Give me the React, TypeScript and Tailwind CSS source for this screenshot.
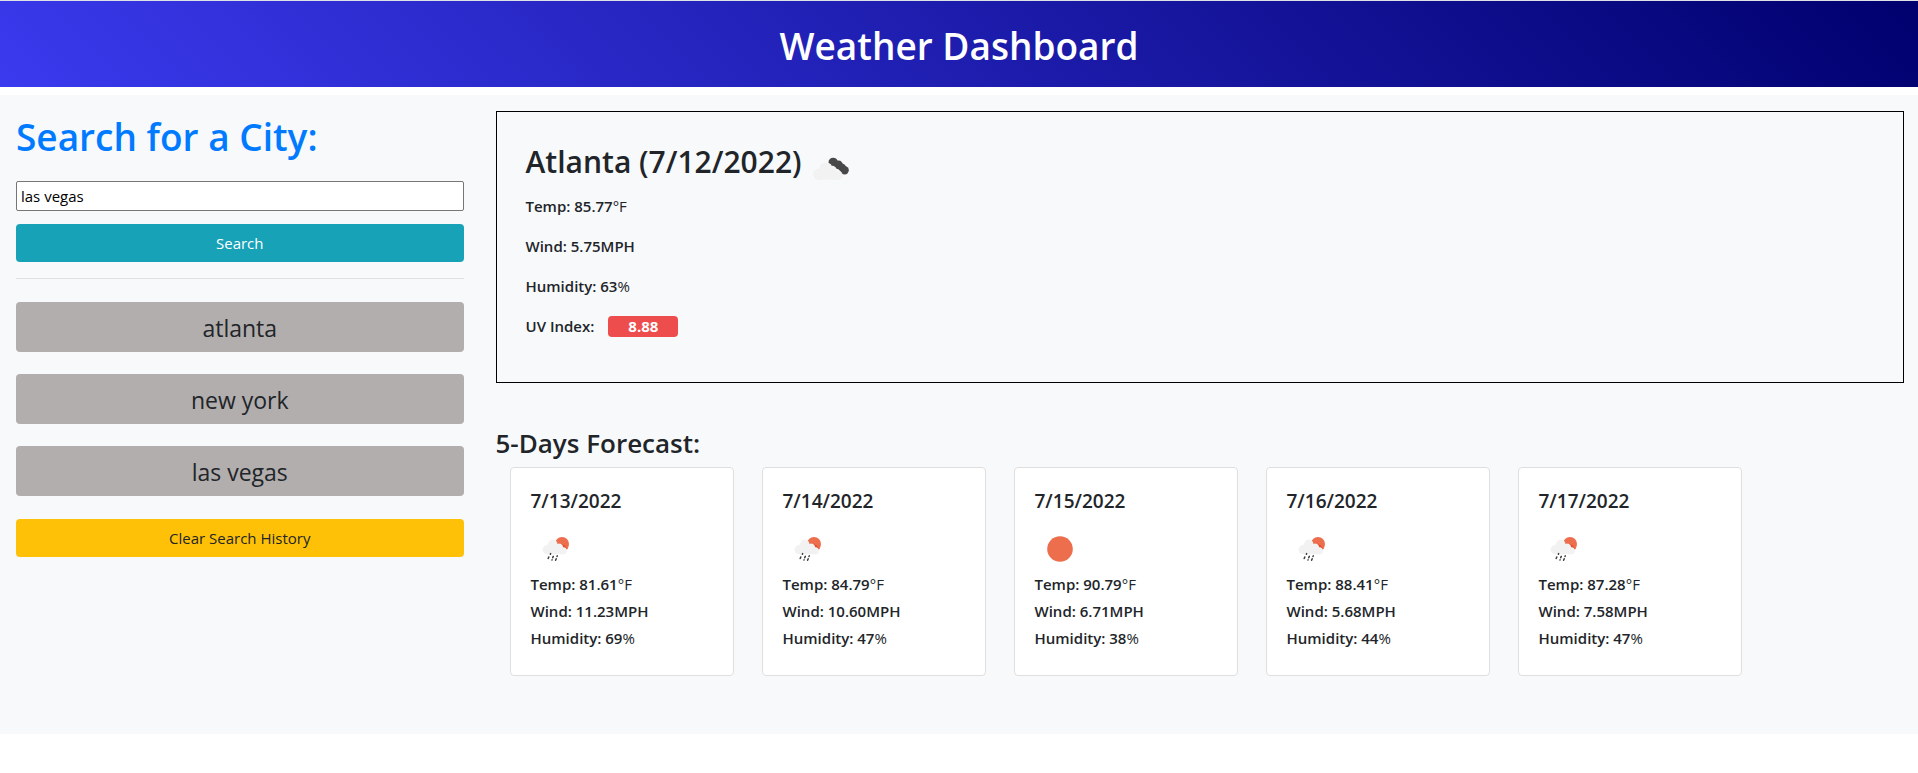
import React, { useState } from "react";

type IconKind = "rain" | "sun" | "clouds";

interface Day {
  date: string;
  icon: IconKind;
  temp: string;
  wind: string;
  humidity: string;
}

const DAYS: Day[] = [
  { date: "7/13/2022", icon: "rain", temp: "81.61", wind: "11.23", humidity: "69" },
  { date: "7/14/2022", icon: "rain", temp: "84.79", wind: "10.60", humidity: "47" },
  { date: "7/15/2022", icon: "sun", temp: "90.79", wind: "6.71", humidity: "38" },
  { date: "7/16/2022", icon: "rain", temp: "88.41", wind: "5.68", humidity: "44" },
  { date: "7/17/2022", icon: "rain", temp: "87.28", wind: "7.58", humidity: "47" },
];

const HISTORY = ["atlanta", "new york", "las vegas"];

function WeatherIcon({ kind }: { kind: IconKind }) {
  return (
    <svg className="block size-[50px] shrink-0" viewBox="0 0 50 50" aria-hidden="true">
      {kind === "sun" && <circle cx="25" cy="25" r="12.8" fill="#ec6e4c" />}
      {kind === "rain" && (
        <>
          <circle cx="31" cy="19.9" r="7" fill="#ec6e4c" />
          <path
            d="M26 19.200c1.600-.8 3.500 0 4.200 1.300 2.300-.5 4.500.9 4.500 2.800 1.200.2 1.900.800 2.200 1.500l-1 .8-8-1z"
            fill="#e2512f"
          />
          <g fill="#f2f2f2">
            <circle cx="16.200" cy="25.700" r="4.600" />
            <circle cx="21.800" cy="20.200" r="4.700" />
            <circle cx="28" cy="23.800" r="4.200" />
            <circle cx="32.400" cy="26.800" r="3.500" />
            <path d="M16.200 20.500h11l6 9.800h-17z" />
          </g>
          <path
            d="M19.600 29.600l-.2.600M17.800 33l-.6 1.500M22.300 32.400l-.6 1.400M21.100 35.800l-.1.200M26.300 31.900l-.3.600M25.200 34.800l-.6 1.500"
            stroke="#3c3c3c"
            strokeWidth="1.500"
            strokeLinecap="round"
          />
        </>
      )}
      {kind === "clouds" && (
        <>
          <g fill="#484848">
            <circle cx="27.200" cy="18.400" r="4.700" />
            <circle cx="32.600" cy="21" r="4.400" />
            <circle cx="36" cy="23.500" r="3.800" />
            <circle cx="38.600" cy="26.200" r="4.200" />
          </g>
          <g fill="#f8f9fb">
            <circle cx="19.800" cy="24.600" r="6.400" />
            <circle cx="26" cy="26.400" r="4.600" />
            <circle cx="30" cy="29" r="4" />
          </g>
          <g fill="#f2f2f2">
            <circle cx="12.700" cy="30.300" r="5.500" />
            <circle cx="19.800" cy="24.800" r="6.400" />
            <circle cx="25.800" cy="27" r="4.800" />
            <circle cx="32.600" cy="31.500" r="4.300" />
            <path d="M12.700 24.800h14l6 11h-20z" />
          </g>
        </>
      )}
    </svg>
  );
}

function ForecastCard({ day }: { day: Day }) {
  return (
    <li className="w-56 rounded border border-[#dfdfdf] bg-white px-5 pt-[21px] pb-[19px]">
      <h3 className="mb-[11px] text-[19px] leading-6 font-semibold">{day.date}</h3>
      <WeatherIcon kind={day.icon} />
      <div className="flex flex-col gap-2 pt-px pb-2 text-[15px] leading-[19px] font-semibold">
        <p>
          Temp: {day.temp}
          <span className="font-normal">°F</span>
        </p>
        <p>Wind: {day.wind}MPH</p>
        <p>
          Humidity: {day.humidity}
          <span className="font-normal">%</span>
        </p>
      </div>
    </li>
  );
}

export default function App() {
  const [city, setCity] = useState("las vegas");
  return (
    <div className="bg-white font-['Open_Sans','Noto_Sans',sans-serif] text-[15px] leading-6 text-[#212529]">
      <header className="border-t border-[#dee2e6] bg-[linear-gradient(45deg,#3b3aee,#00006e)] px-4 pt-[21px] pb-[17px] text-center text-white">
        <h1 className="text-[37px] leading-[48px] font-semibold">Weather Dashboard</h1>
      </header>

      <div className="mt-2 flex bg-[#f8f9fb]">
        <aside className="w-1/4 shrink-0 px-4 pt-[18px]">
          <form onSubmit={(e) => e.preventDefault()}>
            <label
              htmlFor="city"
              className="mb-5 block text-[37px] leading-[48px] font-semibold text-[#007bff]"
            >
              Search for a City:
            </label>
            <input
              id="city"
              type="text"
              value={city}
              onChange={(e) => setCity(e.target.value)}
              className="block h-[30px] w-full rounded-xs border border-[#767676] bg-white px-1 text-black"
            />
            <button
              type="submit"
              className="mt-[13px] block h-[38px] w-full rounded bg-[#17a2b8] text-white"
            >
              Search
            </button>
          </form>
          <hr className="mt-4 mb-[23px] border-[#dfe0e2]" />
          <div className="flex flex-col gap-[22px]">
            {HISTORY.map((name) => (
              <button
                key={name}
                type="button"
                className="h-[50px] w-full rounded bg-[#b2aead] pt-0.5 text-[23px] leading-9"
              >
                {name}
              </button>
            ))}
          </div>
          <button type="button" className="mt-[23px] h-[38px] w-full rounded bg-[#ffc107]">
            Clear Search History
          </button>
        </aside>

        <main className="min-w-0 flex-1 pt-4 pr-3.5 pb-[58px] pl-4">
          <section className="border border-black px-[29px] pt-[31px] pb-[46px]">
            <div className="mb-0.5 flex gap-1">
              <h2 className="text-[30px] leading-[38px] font-semibold">Atlanta (7/12/2022)</h2>
              <div className="pt-px">
                <WeatherIcon kind="clouds" />
              </div>
            </div>
            <div className="flex flex-col gap-[21px] pt-px leading-[19px] font-semibold">
              <p>
                Temp: 85.77<span className="font-normal">°F</span>
              </p>
              <p>Wind: 5.75MPH</p>
              <p>
                Humidity: 63<span className="font-normal">%</span>
              </p>
              <p className="flex items-center gap-3.5">
                UV Index:
                <span className="-my-px rounded bg-[#ee4d4d] px-5 leading-[21px] font-bold text-white">
                  8.88
                </span>
              </p>
            </div>
          </section>

          <section className="mt-[43px]">
            <h2 className="mb-[7px] text-[26px] leading-[34px] font-semibold">5-Days Forecast:</h2>
            <ul className="flex flex-wrap gap-7 pl-3.5">
              {DAYS.map((day) => (
                <ForecastCard key={day.date} day={day} />
              ))}
            </ul>
          </section>
        </main>
      </div>
    </div>
  );
}
